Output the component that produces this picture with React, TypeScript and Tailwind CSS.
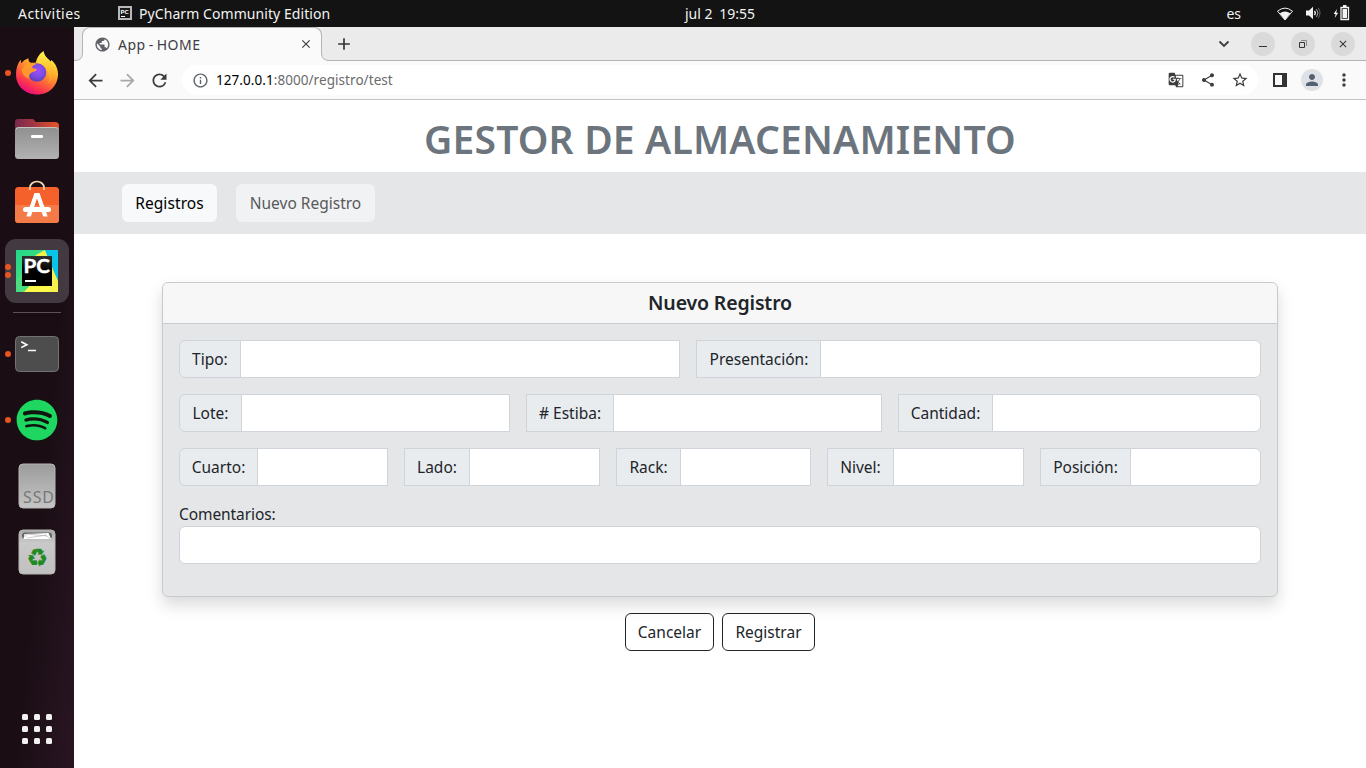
import React, { type ReactNode } from 'react';
import {
  MdPublic, MdArrowBack, MdArrowForward, MdRefresh, MdInfoOutline, MdGTranslate,
  MdShare, MdStarBorder, MdPerson, MdMoreVert, MdClose, MdAdd,
} from 'react-icons/md';
import { FaSpotify } from 'react-icons/fa';

function FirefoxIcon() {
  return (
    <svg width="42" height="44" viewBox="0 0 42 44" className="-mt-px">
      <defs>
        <linearGradient id="ffBody" x1="0.8" y1="0.1" x2="0.3" y2="1">
          <stop offset="0" stopColor="#fff044" />
          <stop offset="0.3" stopColor="#ffb52a" />
          <stop offset="0.58" stopColor="#ff6a36" />
          <stop offset="0.82" stopColor="#fb2d55" />
          <stop offset="1" stopColor="#e40a86" />
        </linearGradient>
        <linearGradient id="ffFlame" x1="0.6" y1="0" x2="0.6" y2="1">
          <stop offset="0" stopColor="#fff14f" />
          <stop offset="0.5" stopColor="#ffc62e" />
          <stop offset="1" stopColor="#ff8a2a" />
        </linearGradient>
        <radialGradient id="ffGlobe" cx="0.55" cy="0.4" r="0.6">
          <stop offset="0" stopColor="#a04bff" />
          <stop offset="0.6" stopColor="#7a4be0" />
          <stop offset="1" stopColor="#5b3fb8" />
        </radialGradient>
      </defs>
      <path d="M4.800 8.500 C5 10.500 5 11.500 5.500 12.300 C7 10 9 8.300 12.500 7.200 C12.200 9 13 11 15 12 L20 11.500 C20.500 7 23.500 3 27.500 .300 C28 4.500 31 7 34 10 C35 10.600 35.400 10.400 35 8.800 C39 12 42 17 42 23 C42 35 33 43.500 21.500 43.500 C9 43.500 0 35 0 23.500 C0 17.500 1.500 12.500 4.800 8.500Z" fill="url(#ffBody)" />
      <path d="M20.500 13 C20.800 7.500 23.500 3 27.500 .300 C28 4.500 31 7 34 10 C40 17 39 28 32 33 C34 27 34 20 28.500 15.500 C26 13.500 23 12.500 20.500 13Z" fill="url(#ffFlame)" />
      <circle cx="21" cy="21.500" r="9.300" fill="url(#ffGlobe)" />
      <path d="M5.500 18 C8 16 11 16.100 14 16.700 C17 17.300 20 17.300 20.800 18.300 C20.500 20.500 18 20.700 16.200 21.300 C13.500 22.500 12.500 24.500 13.500 27.500 C9.500 27 6 23.500 5.500 18Z" fill="#ff982c" />
      <path d="M13 12 C16 11.500 18.500 12.200 20 13.500 C17.500 13.800 16.400 15 16 17.100 L7 16.500 C8.500 14 10.500 12.500 13 12Z" fill="#ff9d29" />
    </svg>
  );
}

function FilesIcon() {
  return (
    <svg width="46" height="42" viewBox="0 0 46 42">
      <defs>
        <linearGradient id="fBack"><stop stopColor="#762a4e" /><stop offset="0.4" stopColor="#a03443" /><stop offset="1" stopColor="#e65627" /></linearGradient>
        <linearGradient id="fFront" x2="0" y2="1"><stop stopColor="#8f8f8f" /><stop offset="1" stopColor="#b2b2b2" /></linearGradient>
      </defs>
      <path d="M1 20V4a3 3 0 0 1 3-3h15l3 3h19a4 4 0 0 1 4 4v12z" fill="url(#fBack)" />
      <rect x="1" y="9" width="44" height="32" rx="3.5" fill="url(#fFront)" />
      <path d="M2 11.5Q2.300 9.500 4.500 9.500h37q2.200 0 2.500 2" fill="none" stroke="#c4c4c4" />
      <rect x="17" y="17" width="12" height="3" rx="1.3" fill="#fff" />
    </svg>
  );
}

function SoftwareIcon() {
  return (
    <svg width="46" height="44" viewBox="0 0 46 44" className="-mt-[6px]">
      <rect x="1" y="7" width="44" height="36" rx="3.5" fill="#f4612a" />
      <path d="M1 25h44v14.500a3.500 3.500 0 0 1-3.500 3.500h-37A3.500 3.500 0 0 1 1 39.500z" fill="#f47b48" />
      <path d="M16 10V7.500a7 6 0 0 1 14 0V10" fill="none" stroke="#f6d9ae" strokeWidth="1.700" />
      <path d="M20.500 13h5l8.200 23.500h-4.500L23 18.500l-6.200 18h-4.500z" fill="#fff" />
      <rect x="9" y="27" width="28" height="5" rx="2.500" fill="#fff" />
    </svg>
  );
}

function PyCharmIcon() {
  return (
    <svg width="42" height="42" viewBox="0 0 42 42">
      <defs>
        <linearGradient id="pcBg" y2="1"><stop stopColor="#21d789" /><stop offset="1" stopColor="#6be37c" /></linearGradient>
        <linearGradient id="pcBox" x2="0" y2="1"><stop stopColor="#303030" /><stop offset="0.5" stopColor="#000" /></linearGradient>
      </defs>
      <path d="M0 0h42v42H0z" fill="url(#pcBg)" />
      <path d="M29 0h13v42L29 8z" fill="#08c5e8" />
      <path d="M20 5 29 0l3 8 10 23v11H8L0 33z" fill="#f8f04b" />
      <path d="M0 33 16 10v32H8z" fill="#45dc83" />
      <path d="M8 42 16 33h18v9z" fill="#fcf84a" />
      <path d="M6 6h30v30H6z" fill="url(#pcBox)" />
      <rect x="9" y="30" width="11" height="2" fill="#fff" />
      <text x="7.500" y="22.800" fontFamily="Lato, sans-serif" fontWeight="700" fontSize="18.500" textLength="26.500" lengthAdjust="spacingAndGlyphs" fill="#fff" stroke="#fff" strokeWidth="0.400">PC</text>
    </svg>
  );
}

function TerminalIcon() {
  return (
    <svg width="46" height="38" viewBox="0 0 46 38">
      <rect x="1.500" y="1.500" width="43" height="35" rx="4" fill="#4d4d4d" stroke="#727272" />
      <path d="m7.200 6.800 5.600 2.900-5.600 2.900" fill="none" stroke="#fff" strokeWidth="1.600" />
      <path d="M14 15.500h8" stroke="#fff" strokeWidth="1.500" />
    </svg>
  );
}

function SsdIcon() {
  return (
    <svg width="38" height="46" viewBox="0 0 38 46">
      <defs><linearGradient id="ssd" x2="0" y2="1"><stop stopColor="#9c9c9c" /><stop offset="1" stopColor="#c5c5c5" /></linearGradient></defs>
      <rect x="1" y="1" width="36" height="44" rx="4" fill="url(#ssd)" stroke="#b5b5b5" />
      <text x="5" y="39.500" fontFamily="Noto Sans, sans-serif" fontSize="16" textLength="31" fill="#777">SSD</text>
    </svg>
  );
}

function TrashIcon() {
  return (
    <svg width="38" height="46" viewBox="0 0 38 46">
      <defs><linearGradient id="trash" x2="0" y2="1"><stop stopColor="#a9a9a9" /><stop offset="0.3" stopColor="#c9c9c9" /><stop offset="1" stopColor="#c0c0c0" /></linearGradient></defs>
      <rect x="1" y="1" width="36" height="44" rx="4" fill="url(#trash)" stroke="#b5b5b5" />
      <rect x="4" y="3.500" width="30" height="6.500" rx="3" fill="#666" />
      <path d="M5.500 10 6.500 5l24-1 2.500 6z" fill="#fff" />
      <path d="m7 8 2-3 20 2 3 3M9 9l20-3" fill="none" stroke="#aaa" strokeWidth="0.600" />
      <text x="19.200" y="36.800" textAnchor="middle" fontFamily="DejaVu Sans, sans-serif" fontSize="24" fill="#1f8a1f" stroke="#1f8a1f" strokeWidth="0.400">♻</text>
    </svg>
  );
}

function DockItem({ dots = 0, active = false, children }: { dots?: number; active?: boolean; children: ReactNode }) {
  return (
    <div className="relative flex h-[66px] w-[74px] shrink-0 items-center justify-center">
      <div className={active ? 'flex h-16 w-16 items-center justify-center rounded-[11px] bg-[#433a41]' : 'flex h-16 w-16 items-center justify-center'}>
        {children}
      </div>
      <div className="absolute inset-y-0 left-[5px] flex flex-col justify-center gap-[2px]">
        {Array.from({ length: dots }, (_, i) => <span key={i} className="size-[6px] rounded-full bg-[#e95420]" />)}
      </div>
    </div>
  );
}

function Dock() {
  return (
    <aside className="flex w-[74px] shrink-0 flex-col bg-linear-to-br from-[#1a0e14] from-60% to-[#2a1523] pt-[13px]">
      <DockItem dots={1}><FirefoxIcon /></DockItem>
      <DockItem><FilesIcon /></DockItem>
      <DockItem><SoftwareIcon /></DockItem>
      <DockItem dots={2} active><PyCharmIcon /></DockItem>
      <div className="flex h-[17px] items-center justify-center"><span className="h-px w-12 bg-[#5b5258]" /></div>
      <DockItem dots={1}><TerminalIcon /></DockItem>
      <DockItem dots={1}><div className="rounded-full bg-[#10160f]"><FaSpotify size={42} className="text-[#1ed760]" /></div></DockItem>
      <DockItem><SsdIcon /></DockItem>
      <DockItem><TrashIcon /></DockItem>
      <div className="mx-auto mt-auto mb-6 grid grid-cols-3 gap-[6px]">
        {Array.from({ length: 9 }, (_, i) => <span key={i} className="size-[6px] rounded-[1.500px] bg-[#f2f0f1]" />)}
      </div>
    </aside>
  );
}

function SystemBar() {
  return (
    <header className="flex h-[27px] shrink-0 items-center bg-[#131313] text-[14px] whitespace-nowrap text-[#f2f2f2]">
      <div className="flex w-[685px] items-center pl-[18px]">
        <span className="w-[100px] tracking-[0.430px]">Activities</span>
        <svg width="14" height="14" viewBox="0 0 14 14" className="mr-[7px] -mt-px">
          <path d="M0 0h14v14H0z" fill="#b9b9b9" />
          <path d="M2 2h10v10H2z" fill="#1a1a1a" />
          <text x="2.600" y="7.800" fontFamily="Lato, sans-serif" fontWeight="900" fontSize="6.200" fill="#fff">PC</text>
          <path d="M3 10h4v1H3z" fill="#fff" />
        </svg>
        <span className="tracking-[0.070px]">PyCharm Community Edition</span>
      </div>
      <div className="flex w-[70px] justify-between pb-px"><span>jul 2</span><span>19:55</span></div>
      <div className="flex flex-1 items-center justify-end pr-4">
        <span className="mr-9">es</span>
        <svg width="16" height="14" viewBox="0 0 16 14" className="mr-[13px]">
          <path d="M.500 4.200Q8-2 15.500 4.200L8 13z" fill="none" stroke="#f2f2f2" />
          <path d="M2.800 6.200Q8 3 13.200 6.200L8 13z" fill="#f2f2f2" />
        </svg>
        <svg width="15" height="14" viewBox="0 0 15 14" className="-mt-px mr-[12px]">
          <path d="M0 4.500h3L7 .800v12.400L3 9.500H0z" fill="#f2f2f2" />
          <path d="M8.500 5q1.600 2 0 4" fill="none" stroke="#f2f2f2" strokeWidth="1.300" />
          <path d="M10.500 3.200q3 3.800 0 7.600" fill="none" stroke="#aaa" />
          <path d="M12.200 1.800q3.600 5 0 10.400" fill="none" stroke="#666" />
        </svg>
        <svg width="17" height="16" viewBox="0 0 17 16" className="-mt-[2px]">
          <path d="M4 4 .600 9h2L1.700 13 5.200 7.800H3.200z" fill="#f2f2f2" />
          <path d="M8 2.500h7.500v12H8z" fill="none" stroke="#f2f2f2" strokeWidth="1.300" />
          <path d="M10 0h3.500v2H10zM9.500 4H14v9H9.500z" fill="#f2f2f2" />
        </svg>
      </div>
    </header>
  );
}

function WindowButton({ children }: { children: ReactNode }) {
  return <div className="flex size-6 items-center justify-center rounded-full bg-[#dadada]">{children}</div>;
}

function TabStrip() {
  return (
    <div className="flex h-[34px] border-b border-[#b5b5b5] bg-[#ebebeb]">
      <div className="relative -mb-px ml-2 flex h-[34px] w-[240px] items-center rounded-t-lg border border-b-0 border-[#b5b5b5] bg-[#fafafa] pr-2 pb-px pl-[11px]">
        <svg className="absolute bottom-0 -left-2" width="8" height="8" viewBox="0 0 8 8"><path d="M0 8V7.500Q7.500 7.500 7.500 0H8V8z" fill="#fafafa" /><path d="M0 7.500Q7.500 7.500 7.500 0" fill="none" stroke="#b5b5b5" /></svg>
        <svg className="absolute -right-2 bottom-0" width="8" height="8" viewBox="0 0 8 8"><path d="M8 8V7.500Q.500 7.500 .500 0H0V8z" fill="#fafafa" /><path d="M8 7.500Q.500 7.500 .500 0" fill="none" stroke="#b5b5b5" /></svg>
        <MdPublic size={17} className="text-[#5f6368]" />
        <span className="ml-[7px] flex gap-[3px] text-[14px] tracking-[0.500px] text-[#3c4043]"><span>App</span><span>-</span><span>HOME</span></span>
        <MdClose size={14} className="ml-auto text-[#3c4043]" />
      </div>
      <MdAdd size={20} className="mt-[7px] ml-3 text-[#333]" />
      <div className="mt-[5px] mr-[11px] ml-auto flex h-6 items-center gap-4">
        <svg width="12" height="8" viewBox="0 0 12 8" className="mr-[5px]"><path d="m1.500 1.500 4.500 4.500 4.500-4.500" fill="none" stroke="#3c3c3c" strokeWidth="1.800" /></svg>
        <WindowButton><span className="mt-1 h-px w-2 bg-[#333]" /></WindowButton>
        <WindowButton>
          <svg width="10" height="10" viewBox="0 0 10 10" fill="none"><path d="M3 1.500h5.500V7" stroke="#888" /><path d="M1.500 3.500h5v5h-5z" stroke="#333" /></svg>
        </WindowButton>
        <WindowButton><MdClose size={12} className="text-[#333]" /></WindowButton>
      </div>
    </div>
  );
}

function Toolbar() {
  return (
    <div className="flex h-[39px] items-center border-b border-[#c4c4c4] bg-[#fafafa] text-[#3c3c3c]">
      <MdArrowBack size={21} className="ml-[11px]" />
      <MdArrowForward size={21} className="ml-[11px] text-[#a8a8a8]" />
      <MdRefresh size={21} className="ml-[11px]" />
      <div className="ml-3 flex h-[30px] flex-1 items-center rounded-full bg-white pr-[9px] pl-[10px]">
        <MdInfoOutline size={17} className="text-[#5f6368]" />
        <span className="ml-[7px] text-[13.500px] tracking-[0.060px] text-[#6b6b6b]"><span className="text-black">127.0.0.1</span>:8000/registro/test</span>
        <MdGTranslate size={16} className="ml-auto" />
        <MdShare size={16} className="ml-[16px]" />
        <MdStarBorder size={18} className="ml-[15px]" />
      </div>
      <svg width="14" height="14" viewBox="0 0 14 14" className="ml-[15px]"><path d="M1 1h12v12H1z" fill="none" stroke="#333" strokeWidth="2" /><path d="M9 1h4v12H9z" fill="#333" /></svg>
      <div className="ml-[14px] flex size-[22px] items-center justify-center rounded-full bg-[#dee1e6]"><MdPerson size={18} className="text-[#566073]" /></div>
      <MdMoreVert size={20} className="mr-3 ml-[11px]" />
    </div>
  );
}

function Label({ className, children }: { className: string; children: ReactNode }) {
  return <label className={'flex shrink-0 items-center justify-center border border-[#ced4da] bg-[#e9ecef] pt-[2px] whitespace-nowrap ' + className}>{children}</label>;
}

function Field({ last = false }: { last?: boolean }) {
  return <input className={last ? '-ml-px min-w-0 flex-1 rounded-r-md border border-[#ced4da] bg-white' : '-ml-px min-w-0 flex-1 border border-[#ced4da] bg-white'} />;
}

function RegistroForm() {
  return (
    <section className="mx-[88px] mt-12 rounded-md border border-[#c9cacc] bg-[#e5e6e8] shadow-[0_8px_16px_rgba(0,0,0,0.15)]">
      <h2 className="flex h-[41px] items-center justify-center rounded-t-[5px] border-b border-[#c9cacc] bg-[#f7f7f7] text-[19.500px] font-semibold tracking-[-0.150px]">Nuevo Registro</h2>
      <form className="flex flex-col gap-4 px-4 pt-4 pb-8">
        <div className="flex h-[38px]">
          <Label className="w-[61.800px] rounded-l-md">Tipo:</Label><Field />
          <Label className="ml-4 w-[125px]">Presentación:</Label><Field last />
        </div>
        <div className="flex h-[38px]">
          <Label className="w-[63px] rounded-l-md">Lote:</Label><Field />
          <Label className="ml-4 w-[88px]"># Estiba:</Label><Field />
          <Label className="ml-4 w-[95px]">Cantidad:</Label><Field last />
        </div>
        <div className="flex h-[38px]">
          <Label className="w-[79px] rounded-l-md">Cuarto:</Label><Field />
          <Label className="ml-4 w-[66px]">Lado:</Label><Field />
          <Label className="ml-4 w-[65px]">Rack:</Label><Field />
          <Label className="ml-4 w-[67px]">Nivel:</Label><Field />
          <Label className="ml-4 w-[91px]">Posición:</Label><Field last />
        </div>
        <div className="flex flex-col">
          <label className="h-6 leading-6 tracking-[-0.080px]">Comentarios:</label>
          <input className="h-[38px] w-full rounded-md border border-[#ced4da] bg-white" />
        </div>
      </form>
    </section>
  );
}

export default function App() {
  return (
    <div className="flex h-[768px] w-[1366px] flex-col overflow-hidden bg-white font-['Noto_Sans',sans-serif]">
      <SystemBar />
      <div className="flex min-h-0 flex-1">
        <Dock />
        <div className="min-w-0 flex-1">
          <TabStrip />
          <Toolbar />
          <main className="text-[15.500px] text-[#212529]">
            <h1 className="flex h-[72px] items-center justify-center pt-[6px] text-[39px] font-semibold tracking-[0.170px] text-[#6c757d]">GESTOR DE ALMACENAMIENTO</h1>
            <nav className="flex h-[62px] items-center gap-[19px] bg-[#e5e6e8] pl-12">
              <a className="flex h-[38px] w-[95px] items-center justify-center rounded-md bg-[#f8f9fa] pt-[2px] tracking-[0.080px] text-black">Registros</a>
              <a className="flex h-[38px] w-[139px] items-center justify-center rounded-md bg-[#f1f2f4] pt-[2px] text-[#58595a]">Nuevo Registro</a>
            </nav>
            <RegistroForm />
            <div className="mt-4 flex justify-center gap-2">
              <button className="h-[38px] w-[89px] rounded-md border border-[#212529] pt-[2px]">Cancelar</button>
              <button className="h-[38px] w-[93px] rounded-md border border-[#212529] pt-[2px]">Registrar</button>
            </div>
          </main>
        </div>
      </div>
    </div>
  );
}
